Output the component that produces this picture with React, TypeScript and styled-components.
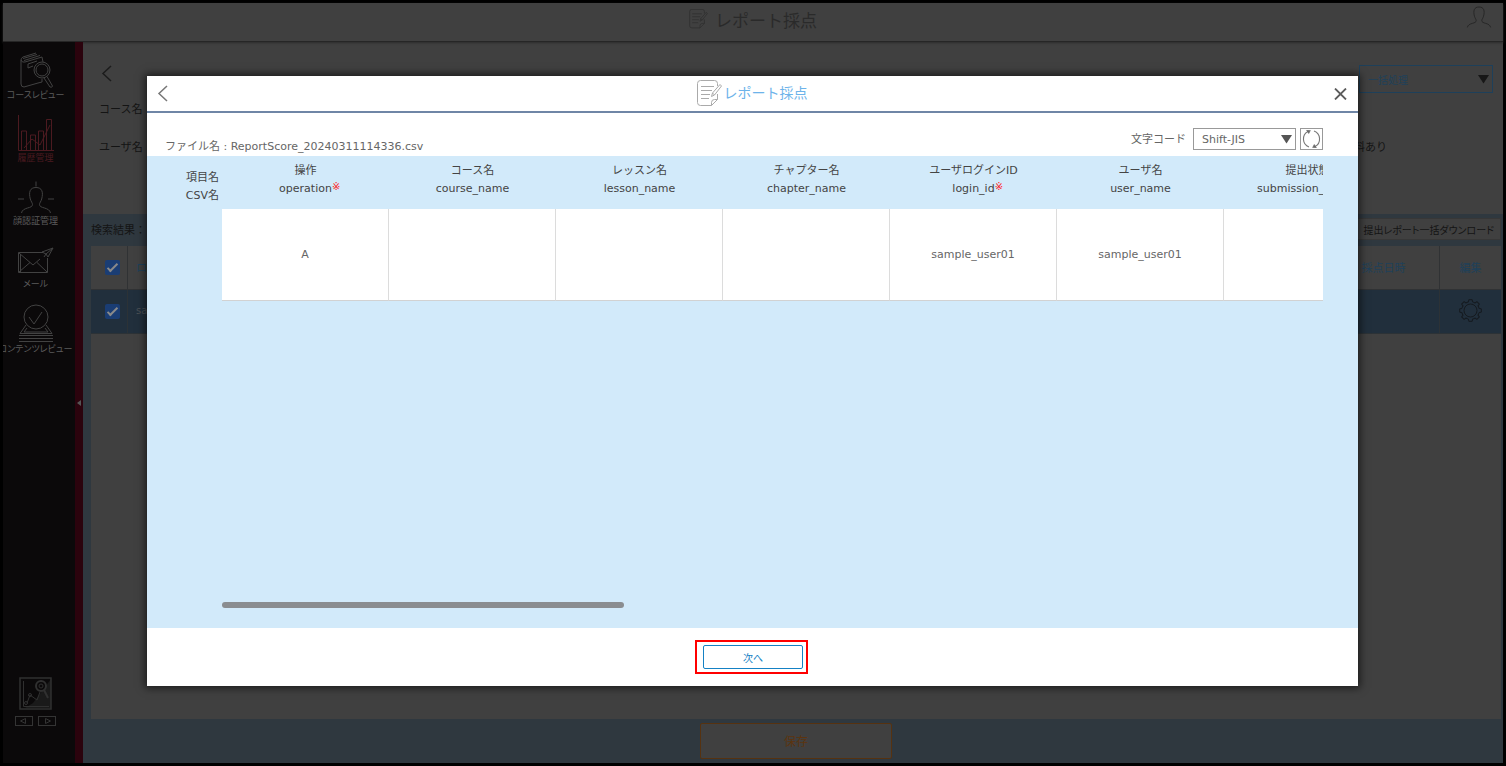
import React from "react";
import styled, { createGlobalStyle } from "styled-components";

const c = {
  panel: "#404040",
  rail: "#0b090a",
  railEdge: "#2b030d",
  railText: "#5c5c5c",
  railIcon: "#424242",
  railActive: "#4c1a20",
  backBlue: "#2f383f",
  rowBlue: "#212f3c",
  backText: "#141414",
  backLink: "#1e405a",
  lightBlue: "#d2eafa",
  text: "#444444",
  softText: "#666666",
  accent: "#1581c4",
};

const GlobalStyle = createGlobalStyle`
  *, *::before, *::after { box-sizing: border-box; }
  body { margin: 0; background: #000; }
  body, button, select, input {
    font-family: "DejaVu Sans", "Noto Sans CJK JP", sans-serif;
    font-size: 11px;
  }
  button { padding: 0; border: 0; background: none; cursor: pointer; }
  svg { display: block; fill: none; }
`;

/* ---------- background screen ---------- */

const Screen = styled.div`
  display: flex;
  flex-direction: column;
  min-height: 100vh;
  border: 3px solid #000;
  background: ${c.panel};
  color: ${c.backText};
`;

const TopBar = styled.header`
  display: grid;
  grid-template-columns: 1fr auto 1fr;
  height: 39px;
  border-bottom: 1px solid #262626;
  box-shadow: 0 1px 2px #2c2c2c;
`;

const TopTitle = styled.h1`
  display: flex;
  grid-column: 2;
  align-items: center;
  gap: 7px;
  height: 32px;
  margin: 0;
  color: #2a2a2a;
  font-size: 17px;
  font-weight: 400;
`;

const UserButton = styled.button`
  justify-self: end;
  height: 27px;
  padding-right: 10px;
`;

const Body = styled.div`
  display: flex;
  flex: 1;
`;

const Rail = styled.nav`
  display: flex;
  flex-direction: column;
  justify-content: space-between;
  width: 72px;
  padding: 0 7px 37px 0;
  overflow: hidden;
  background: ${c.rail};
`;

const RailList = styled.ul`
  margin: 0;
  padding: 0;
  list-style: none;
`;

const RailLink = styled.a<{ $active?: boolean }>`
  display: flex;
  flex-direction: column;
  align-items: center;
  height: 63px;
  padding-top: 10px;
  color: ${(p) => (p.$active ? c.railActive : c.railText)};
  font-size: 9px;
  font-feature-settings: "palt";
  line-height: 14px;
  text-decoration: none;
  white-space: nowrap;
  svg { flex: none; stroke: ${(p) => (p.$active ? c.railActive : c.railIcon)}; }
`;

const RailTools = styled.div`
  display: grid;
  grid-template-columns: 18px 18px;
  justify-content: center;
  justify-items: center;
  gap: 6px 5px;
`;

const ChartTool = styled.button`
  grid-column: 1 / 3;
`;

const RailEdge = styled.button`
  display: flex;
  align-items: center;
  justify-content: flex-end;
  width: 8px;
  padding-right: 2px;
  background: ${c.railEdge};
`;

const Content = styled.main`
  display: flex;
  flex: 1;
  flex-direction: column;
  min-width: 0;
`;

const FilterPanel = styled.section`
  display: grid;
  grid-template-columns: 1fr auto;
  grid-template-rows: 28px 30px 46px;
  align-items: center;
  height: 172px;
  padding: 23px 10px 0 16px;
`;

const BackButton = styled.button`
  justify-self: start;
`;

const FilterBack = styled(BackButton)`
  align-self: start;
  padding-left: 2px;
`;

const FilterValue = styled.span`
  grid-row: 3;
  grid-column: 2;
  justify-self: start;
  margin-left: -16px;
`;

const SelectWrap = styled.div<{ $width: number }>`
  display: grid;
  width: ${(p) => p.$width}px;
  align-items: center;
  > * { grid-area: 1 / 1; }
  svg { justify-self: end; margin-right: 4px; pointer-events: none; }
`;

const BulkSelect = styled.select`
  width: 100%;
  height: 28px;
  padding: 2px 8px 0;
  border: 1px solid ${c.backLink};
  border-radius: 0;
  background: transparent;
  color: ${c.backLink};
  font-size: 10px;
  appearance: none;
`;

const Results = styled.section`
  display: flex;
  flex: 1;
  flex-direction: column;
  padding: 0 2px 0 8px;
  background: ${c.backBlue};
`;

const ResultsBar = styled.div`
  display: flex;
  align-items: center;
  justify-content: space-between;
  height: 32px;
  padding-bottom: 2px;
`;

const DownloadButton = styled.button`
  width: 160px;
  height: 22px;
  padding-right: 6px;
  border: 1px solid #373737;
  background: ${c.panel};
  color: ${c.backText};
  font-size: 10px;
  font-feature-settings: "palt";
  text-align: right;
  white-space: nowrap;
`;

const ResultsBox = styled.div`
  flex: 1;
  background: ${c.panel};
`;

const ResultsTable = styled.table`
  width: 100%;
  border-spacing: 0;
  table-layout: fixed;
  color: ${c.backLink};
  th, td {
    height: 44px;
    padding: 0 0 2px;
    border-bottom: 1px solid #303234;
    border-right: 1px solid #303234;
    font-weight: 400;
  }
  th:last-child, td:last-child { border-right: 0; }
  td { background: ${c.rowBlue}; border-color: #2c3236; }
  th:nth-child(2), td:nth-child(2) { padding-left: 8px; text-align: left; }
  td:nth-child(2) { color: #4b5054; font-size: 10px; }
  svg { margin: auto; }
`;

const Col = styled.col<{ $width?: number }>`
  width: ${(p) => (p.$width ? p.$width + "px" : "auto")};
`;

const Check = styled.input`
  display: grid;
  width: 15px;
  height: 15px;
  margin: 2px 7px 0 14px;
  border-radius: 2px;
  background: #1a3d74;
  appearance: none;
  place-items: center;
  &::after {
    content: "";
    width: 11px;
    height: 5px;
    margin-bottom: 3px;
    border: solid #8a8a8a;
    border-width: 0 0 2px 2px;
    rotate: -45deg;
  }
`;

const SaveBar = styled.footer`
  display: flex;
  align-items: center;
  justify-content: center;
  height: 44px;
`;

const SaveButton = styled.button`
  width: 192px;
  height: 36px;
  padding-bottom: 2px;
  border: 1px solid #563210;
  border-radius: 2px;
  background: ${c.panel};
  color: #5c340f;
  font-size: 12px;
`;

/* ---------- dialog ---------- */

const Backdrop = styled.div`
  position: absolute;
  inset: 0;
  display: grid;
  padding: 76px 148px 80px 147px;
`;

const Dialog = styled.section`
  display: flex;
  flex-direction: column;
  min-width: 0;
  background: #fff;
  box-shadow: 0 0 8px 2px rgba(0, 0, 0, 0.6);
  color: ${c.softText};
`;

const DialogHead = styled.header`
  display: grid;
  grid-template-columns: 1fr auto 1fr;
  align-items: center;
  height: 37px;
  padding: 0 11px 0 10px;
  border-bottom: 2px solid #6f86a6;
`;

const DialogTitle = styled.h2`
  display: flex;
  align-items: center;
  gap: 2px;
  margin: 0;
  color: #6db3ea;
  font-size: 14px;
  font-weight: 400;
  line-height: 20px;
  span { padding-bottom: 2px; }
`;

const CloseButton = styled.button`
  justify-self: end;
`;

const FileRow = styled.div`
  display: flex;
  justify-content: space-between;
  height: 43px;
  padding: 0 35px 0 18px;
`;

const FileName = styled.p`
  align-self: flex-end;
  margin: 0;
  line-height: 18px;
`;

const Encoding = styled.div`
  display: flex;
  align-items: center;
  align-self: flex-start;
  gap: 4px;
  padding-top: 15px;
  label { padding: 0 3px 3px 0; }
`;

const EncodingSelect = styled.select`
  width: 100%;
  height: 22px;
  padding: 0 8px;
  border: 1px solid #999;
  border-radius: 0;
  background: #fff;
  color: ${c.softText};
  appearance: none;
`;

const ReloadButton = styled.button`
  display: grid;
  width: 23px;
  height: 22px;
  border: 1px solid #999;
  place-items: center;
`;

const Preview = styled.div`
  display: grid;
  flex: 1;
  grid-template-columns: 75px minmax(0, 1fr);
  padding-right: 35px;
  background: ${c.lightBlue};
  color: ${c.text};
  line-height: 18px;
`;

const AxisLabels = styled.div`
  padding: 13px 3px 0 0;
  text-align: right;
`;

const Scroller = styled.div`
  display: flex;
  flex-direction: column;
  justify-content: space-between;
  padding-bottom: 20px;
  overflow: hidden;
`;

const CsvTable = styled.table`
  width: 1336px;
  border-spacing: 0;
  table-layout: fixed;
  th {
    height: 53px;
    padding: 6px 0 0;
    font-weight: 400;
    vertical-align: top;
  }
  td {
    height: 92px;
    padding: 0;
    border-right: 1px solid #dcdcdc;
    border-bottom: 1px solid #d2d2d2;
    background: #fff;
    color: ${c.softText};
    text-align: center;
  }
`;

const Key = styled.div`
  width: fit-content;
  margin: 0 auto;
  position: relative;
`;

const Required = styled.span`
  position: absolute;
  top: 0;
  left: 100%;
  color: #f22;
  font-size: 10px;
  line-height: 14px;
`;

const ScrollThumb = styled.div`
  width: 402px;
  height: 6px;
  border-radius: 3px;
  background: #8a8d90;
`;

const DialogFoot = styled.footer`
  display: flex;
  justify-content: center;
  height: 58px;
  padding: 12px 2px 0 0;
`;

const Highlight = styled.div`
  width: 113px;
  height: 34px;
  padding: 3px 3px 3px 6px;
  border: 2px solid #f00;
`;

const NextButton = styled.button`
  width: 100px;
  height: 24px;
  border: 1px solid ${c.accent};
  border-radius: 2px;
  background: #fff;
  color: ${c.accent};
  font-size: 10px;
`;

/* ---------- drawings ---------- */

const ReportIcon = ({ width, height, color }: { width: number; height: number; color: string }) => (
  <svg width={width} height={height} viewBox="0 0 25 27" stroke={color} strokeWidth="1">
    <path d="M20.500 6V3.500q0-3-3-3h-14q-3 0-3 3v19q0 3 3 3h11l6-6V14M14.500 25.500v-3q0-3 3-3h3" />
    <path d="M4 6.500h13M4 10.500h11M4 14.500h9M4 18.500h8" />
    <path d="M14.500 16.500l1-3.500L23 4.500l1.500 1.500L17.500 15zM15.500 13l2 2" />
  </svg>
);

const Chevron = ({ color }: { color: string }) => (
  <svg width="11" height="17" viewBox="0 0 11 17" stroke={color} strokeWidth="1.5">
    <path d="M10 1L2 8.500l8 7.500" />
  </svg>
);

const Triangle = ({ color }: { color: string }) => (
  <svg width="11" height="10" viewBox="0 0 11 10">
    <path d="M0 1h11L5.500 9.500z" fill={color} />
  </svg>
);

const BookIcon = () => (
  <svg width="36" height="36" viewBox="0 0 36 36">
    <path d="M3 8v24q0 3 3 3l14-4M3 8q0-2 2-3l13-4M3 8q1 3 4 2l17-5M5 6.500L19 2.500M6 8.500l16-5M24 5l1 5" />
    <path d="M10 12l9-3M10 12v4l5-2M24 27v3l-4 1" />
    <circle cx="24" cy="18" r="8" />
    <circle cx="24" cy="18" r="6" />
    <path d="M26 26l6 9q2 1 2.500-1L29 24.500" />
  </svg>
);

const BarsIcon = () => (
  <svg width="36" height="36" viewBox="0 0 36 36">
    <path d="M.5 0v35.500H36M3.500 35V16h5v19M12.500 35V20h5v15M20.500 35V16h5v19M28.500 35V4.500h5V35" />
    <path d="M6 33l8-9 8 6 10-20" />
  </svg>
);

const PersonPath =
  "M3.500 33c.5-3 3-4 6-5 3-.8 5-1.500 5-3.500 0-1.500-1.500-3-2.200-5.500C10.500 12 12 7.500 18 7.500S25.500 12 23.700 19c-.7 2.500-2.200 4-2.200 5.500 0 2 2 2.700 5 3.500 3 1 5.500 2 6 5";

const FaceIcon = () => (
  <svg width="36" height="36" viewBox="0 0 36 36">
    <path d={PersonPath} transform="translate(0 2)" />
    <path d="M18 3.500v5M0 21h6M30 21h6" />
  </svg>
);

const MailIcon = () => (
  <svg width="36" height="36" viewBox="0 0 36 36">
    <path d="M25 11.500H.5v20h29V17M1 12l14 12 7-6M1 31l11-9.500M29 31l-10-9.500M2.500 31V13" />
    <path d="M24 11l11-4-5 9-2-3zM28 13l7-6M28 13l-2 3" />
  </svg>
);

const BadgeIcon = () => (
  <svg width="36" height="38" viewBox="0 0 36 38">
    <circle cx="18" cy="13" r="12" />
    <path d="M11 13l5 7 8-12M8 21l-6 8.500h32L28 21M9 24l-3 4h24l-3-4M1 31.500h34M1 34.500h34M1 37.500h34" />
  </svg>
);

const TrendIcon = () => (
  <svg width="33" height="33" viewBox="0 0 33 33" stroke="#303030">
    <path d="M14 26L32 2v29H6z" fill="#1a1a1a" stroke="none" />
    <rect x="1" y="1" width="31" height="31" strokeWidth="1.500" />
    <path d="M4.500 4v25.500H30M8 26l3-8 7 5 3-8" />
    <circle cx="22" cy="9" r="5" strokeWidth="2" />
    <circle cx="22" cy="9" r="2" />
    <circle cx="7" cy="26" r="1.500" />
    <circle cx="11" cy="18" r="1.500" />
    <path d="M25 13l4 8" strokeWidth="2" />
  </svg>
);

const StepIcon = ({ next }: { next?: boolean }) => (
  <svg width="18" height="10" viewBox="0 0 18 10" stroke="#343434">
    <rect x=".5" y=".5" width="17" height="9" />
    <path d={next ? "M7.500 2.500v5l5-2.500z" : "M10.500 2.500v5l-5-2.500z"} />
  </svg>
);

const UserIcon = () => (
  <svg width="28" height="24" viewBox="2 5 32 30" stroke="#262626" strokeWidth="1.200">
    <path d={PersonPath} />
  </svg>
);

const gearTeeth = [0, 45, 90, 135, 180, 225, 270, 315];

const GearIcon = () => (
  <svg width="23" height="23" viewBox="-11.500 -11.500 23 23" stroke="#151a1f">
    <circle r="6.500" />
    {gearTeeth.map((deg) => (
      <path
        key={deg}
        transform={`rotate(${deg})`}
        d="M-3.200-8.200L-2-8.600-1.700-10.800H1.700L2-8.600 3.200-8.200Q4-7.800 3.800-7.800"
      />
    ))}
  </svg>
);

const ReloadIcon = () => (
  <svg width="19" height="20" viewBox="0 0 19 20" stroke="#777" strokeWidth="1.100">
    <path d="M7 18A8.500 8.500 0 0 1 6 2.500M12 2A8.500 8.500 0 0 1 13 17.500" />
    <path d="M4.500 1.500l3.500.2L6.500 4.500M14.500 18.500l-3.500-.2 1.500-2.800" fill="#666" />
  </svg>
);

const CloseIcon = () => (
  <svg width="13" height="12" viewBox="0 0 13 12" stroke="#5c5c5c" strokeWidth="1.800">
    <path d="M1 .5l11 11M12 .5l-11 11" />
  </svg>
);

const navItems = [
  { label: "コースレビュー", icon: <BookIcon /> },
  { label: "履歴管理", icon: <BarsIcon />, active: true },
  { label: "顔認証管理", icon: <FaceIcon /> },
  { label: "メール", icon: <MailIcon /> },
  { label: "コンテンツレビュー", icon: <BadgeIcon /> },
];

const columns = [
  { name: "操作", key: "operation", required: true, value: "A" },
  { name: "コース名", key: "course_name", value: "" },
  { name: "レッスン名", key: "lesson_name", value: "" },
  { name: "チャプター名", key: "chapter_name", value: "" },
  { name: "ユーザログインID", key: "login_id", required: true, value: "sample_user01" },
  { name: "ユーザ名", key: "user_name", value: "sample_user01" },
  { name: "提出状態", key: "submission_status", value: "" },
  { name: "得点", key: "score", value: "" },
];

export default function App() {
  return (
    <>
      <GlobalStyle />
      <Screen>
        <TopBar>
          <TopTitle>
            <ReportIcon width={19} height={20} color="#2e2e2e" />
            レポート採点
          </TopTitle>
          <UserButton aria-label="ユーザ"><UserIcon /></UserButton>
        </TopBar>
        <Body>
          <Rail>
            <RailList>
              {navItems.map((item) => (
                <li key={item.label}>
                  <RailLink href="#" $active={item.active}>
                    {item.icon}
                    {item.label}
                  </RailLink>
                </li>
              ))}
            </RailList>
            <RailTools>
              <ChartTool aria-label="グラフ"><TrendIcon /></ChartTool>
              <button aria-label="前へ"><StepIcon /></button>
              <button aria-label="次へ"><StepIcon next /></button>
            </RailTools>
          </Rail>
          <RailEdge aria-label="メニューを閉じる">
            <svg width="4" height="6" viewBox="0 0 4 6"><path d="M4 0v6L0 3z" fill="#555" /></svg>
          </RailEdge>
          <Content>
            <FilterPanel>
              <FilterBack aria-label="戻る"><Chevron color="#1c1c1c" /></FilterBack>
              <SelectWrap $width={134}>
                <BulkSelect aria-label="一括処理"><option>一括処理</option></BulkSelect>
                <Triangle color="#171717" />
              </SelectWrap>
              <span>コース名</span>
              <span />
              <span>ユーザ名</span>
              <FilterValue>資料あり</FilterValue>
            </FilterPanel>
            <Results>
              <ResultsBar>
                <span>検索結果：</span>
                <DownloadButton>提出レポート一括ダウンロード</DownloadButton>
              </ResultsBar>
              <ResultsBox>
                <ResultsTable>
                  <colgroup>
                    <Col $width={37} />
                    <Col />
                    <Col $width={112} />
                    <Col $width={61} />
                  </colgroup>
                  <thead>
                    <tr>
                      <th><Check type="checkbox" defaultChecked aria-label="すべて選択" /></th>
                      <th>ログインID</th>
                      <th>採点日時</th>
                      <th>編集</th>
                    </tr>
                  </thead>
                  <tbody>
                    <tr>
                      <td><Check type="checkbox" defaultChecked aria-label="sample_user01" /></td>
                      <td>sample_user01</td>
                      <td />
                      <td><GearIcon /></td>
                    </tr>
                  </tbody>
                </ResultsTable>
              </ResultsBox>
              <SaveBar><SaveButton>保存</SaveButton></SaveBar>
            </Results>
          </Content>
        </Body>
      </Screen>

      <Backdrop>
        <Dialog role="dialog" aria-label="レポート採点">
          <DialogHead>
            <BackButton aria-label="戻る"><Chevron color="#777" /></BackButton>
            <DialogTitle>
              <ReportIcon width={25} height={27} color="#aaa" />
              <span>レポート採点</span>
            </DialogTitle>
            <CloseButton aria-label="閉じる"><CloseIcon /></CloseButton>
          </DialogHead>
          <FileRow>
            <FileName>ファイル名 : ReportScore_20240311114336.csv</FileName>
            <Encoding>
              <label htmlFor="encoding">文字コード</label>
              <SelectWrap $width={103}>
                <EncodingSelect id="encoding"><option>Shift-JIS</option></EncodingSelect>
                <Triangle color="#555" />
              </SelectWrap>
              <ReloadButton aria-label="再読み込み"><ReloadIcon /></ReloadButton>
            </Encoding>
          </FileRow>
          <Preview>
            <AxisLabels>
              <div>項目名</div>
              <div>CSV名</div>
            </AxisLabels>
            <Scroller>
              <CsvTable>
                <thead>
                  <tr>
                    {columns.map((col) => (
                      <th key={col.key}>
                        {col.name}
                        <Key>
                          {col.key}
                          {col.required && <Required>※</Required>}
                        </Key>
                      </th>
                    ))}
                  </tr>
                </thead>
                <tbody>
                  <tr>
                    {columns.map((col) => <td key={col.key}>{col.value}</td>)}
                  </tr>
                </tbody>
              </CsvTable>
              <ScrollThumb />
            </Scroller>
          </Preview>
          <DialogFoot>
            <Highlight><NextButton>次へ</NextButton></Highlight>
          </DialogFoot>
        </Dialog>
      </Backdrop>
    </>
  );
}
